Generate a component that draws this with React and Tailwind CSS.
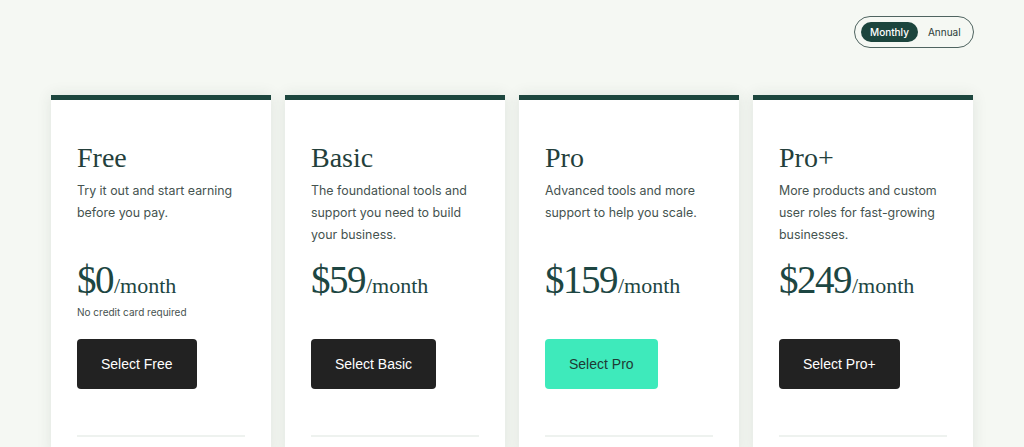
const plans = [
  {
    name: 'Free',
    desc: 'Try it out and start earning before you pay.',
    price: '$0',
    note: 'No credit card required',
    cta: 'Select Free',
  },
  {
    name: 'Basic',
    desc: 'The foundational tools and support you need to build your business.',
    price: '$59',
    cta: 'Select Basic',
  },
  {
    name: 'Pro',
    desc: 'Advanced tools and more support to help you scale.',
    price: '$159',
    cta: 'Select Pro',
    highlight: true,
  },
  {
    name: 'Pro+',
    desc: 'More products and custom user roles for fast-growing businesses.',
    price: '$249',
    cta: 'Select Pro+',
  },
]

const serif = { fontFamily: '"Liberation Serif", "DejaVu Serif", serif' }

function PlanCard({ plan }) {
  return (
    <div className="bg-white border-t-[5px] border-[#1d463e] shadow-[0_0_14px_rgba(40,60,50,0.10)] px-[26px] pt-[40px] h-[360px]">
      <h2 className="text-[28px] leading-[36px] text-[#243f3b]" style={serif}>
        {plan.name}
      </h2>
      <p className="mt-[4px] min-h-[66px] text-[12.4px] leading-[22px] text-[#45534f]">{plan.desc}</p>
      <div className="mt-[10px] h-[83px]">
        <div className="flex items-baseline text-[#1d4642] h-[48px] leading-[48px]" style={serif}>
          <span className="text-[39px] tracking-[-1.5px]">{plan.price}</span>
          <span className="text-[22px] ml-[1px]">/month</span>
        </div>
        {plan.note && (
          <p className="text-[10px] leading-[14px] text-[#46524f] mt-[1px]">{plan.note}</p>
        )}
      </div>
      <button
        className={`h-[50px] px-6 rounded-[4px] text-[14px] ${
          plan.highlight ? 'bg-[#3eeabb] text-[#1e3a34]' : 'bg-[#222222] text-white'
        }`}
        style={{ fontFamily: '"Liberation Sans", Arial, sans-serif' }}
      >
        {plan.cta}
      </button>
      <div className="mt-[46px] h-[2px] bg-[#eef2ef]" />
    </div>
  )
}

export default function App() {
  return (
    <div
      className="h-[447px] overflow-hidden bg-[#f5f8f3]"
      style={{ fontFamily: 'Inter, "Open Sans", sans-serif' }}
    >
      <div className="w-[922px] mx-auto pt-[16px]">
        <div className="flex justify-end mr-[-1px]">
          <div className="flex items-center h-[32px] w-[120px] rounded-full border border-[#4f6460] px-[6px]">
            <span className="h-[20px] px-[9px] rounded-full bg-[#1c453d] text-white text-[10px] font-medium leading-[20px]">
              Monthly
            </span>
            <span className="ml-[10px] text-[10px] text-[#2a3a37]">Annual</span>
          </div>
        </div>
        <div className="mt-[47px] grid grid-cols-4 gap-[14px]">
          {plans.map((p) => (
            <PlanCard key={p.name} plan={p} />
          ))}
        </div>
      </div>
    </div>
  )
}
